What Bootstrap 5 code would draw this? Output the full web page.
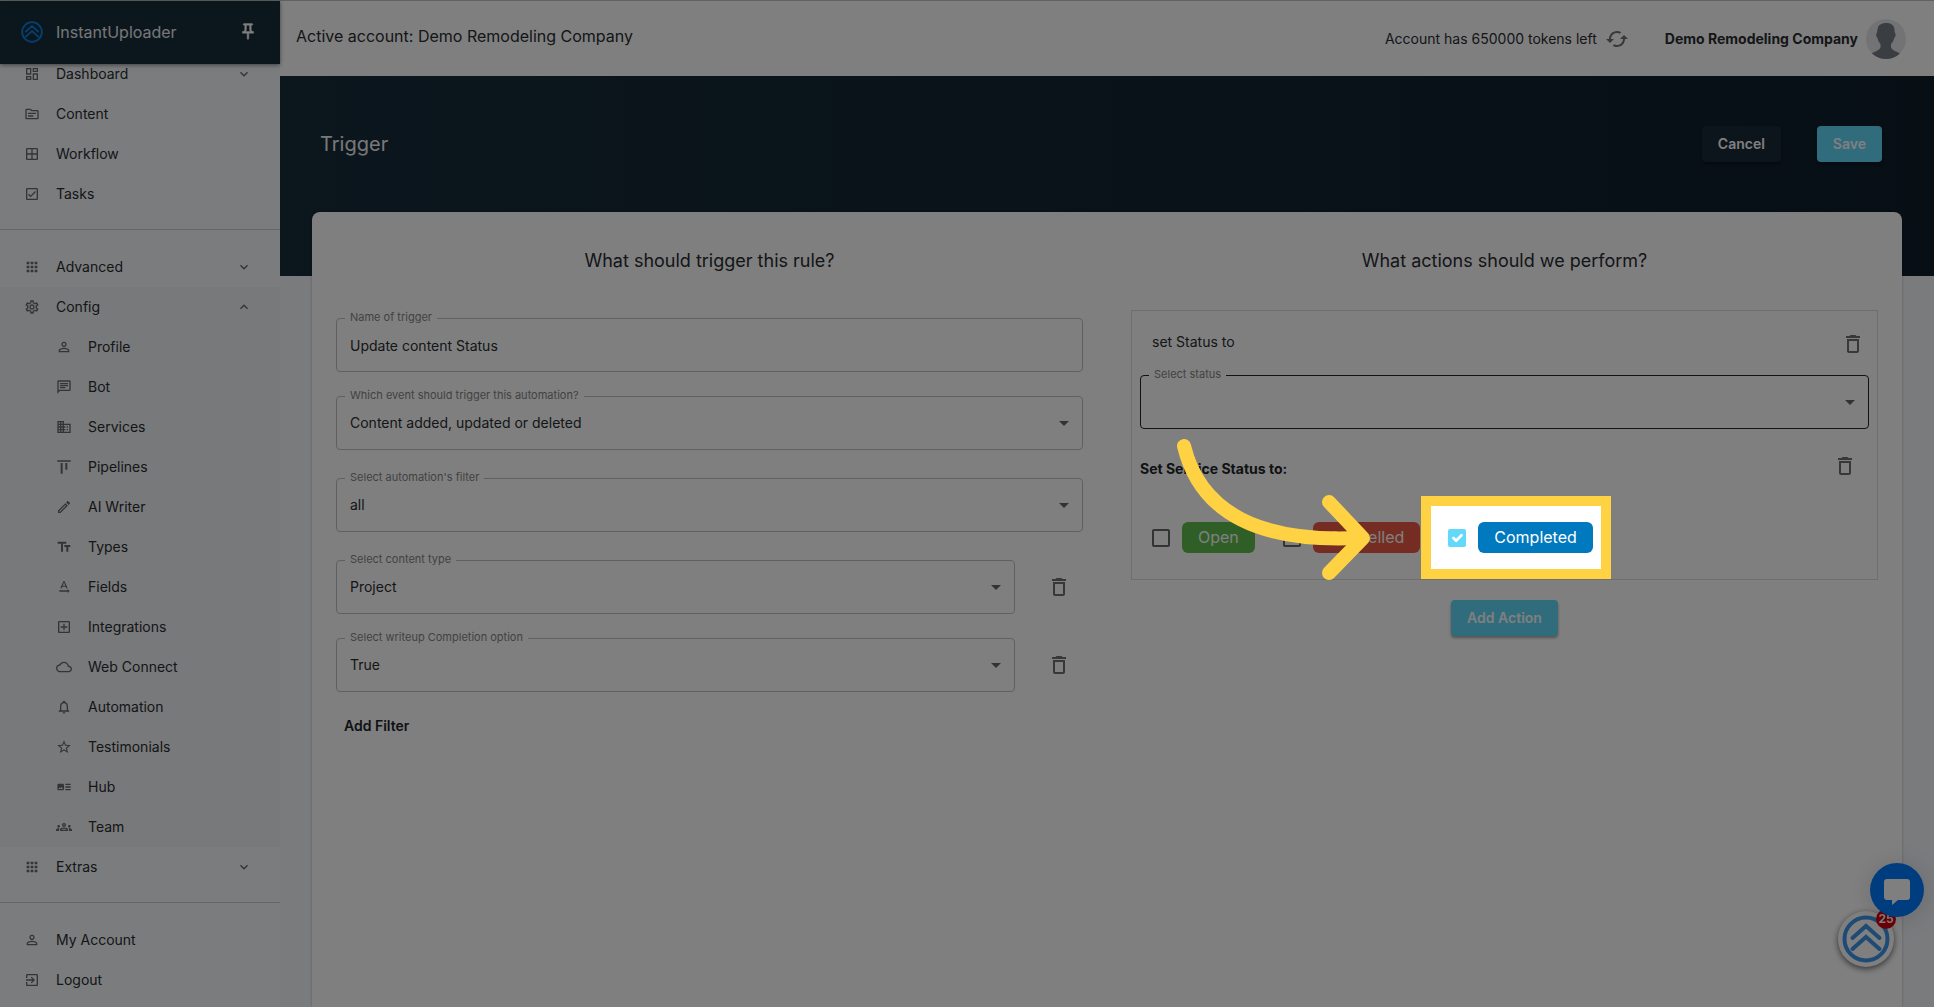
<!DOCTYPE html>
<html lang="en">
<head>
<meta charset="utf-8">
<meta name="viewport" content="width=device-width, initial-scale=1">
<title>InstantUploader - Trigger</title>
<link href="https://cdn.jsdelivr.net/npm/bootstrap@5.3.0/dist/css/bootstrap.min.css" rel="stylesheet">
<style>
  body { font-family: Inter, "Liberation Sans", sans-serif; font-size: 14px; line-height: 20px; color: #2a2d31; background: #f4f6fb; overflow: hidden; }
  .app-shell { min-height: 100vh; border-top: 1px solid #c4c4c4; }
  .ico { width: 16px; height: 16px; fill: currentColor; flex: none; }
  .ico-lg { width: 24px; height: 24px; }

  .side { width: 280px; flex: none; background: #f6f8fb; }
  .side-head { height: 63px; padding: 0 20px 2px 21px; background: #182c3b; color: #fff; position: relative; z-index: 2; box-shadow: 0 1px 4px rgba(0,0,0,.5); font-size: 16px; }
  .side-head a { gap: 13px; color: #e9ecef; }
  .side-logo { width: 22px; height: 22px; color: #0b7de0; }
  .side-nav { margin-top: -10px; }
  .side-link { height: 40px; padding: 0 28px 0 24px; gap: 16px; color: #2a2d31; text-decoration: none; }
  .side-link .ico { color: #66696d; }
  .side-sub .side-link { padding-left: 56px; }
  .side-open { background: #f0f2f5; }
  .side-rule { margin: 15px 0 17px; border-color: #cbced2; opacity: 1; }

  .topbar { min-height: 75px; padding: 0 28px 0 16px; background: #fff; }
  .topbar-title { font-size: 16px; padding-bottom: 6px; }
  .account-name { margin: 0 8px 0 36px; font-weight: 700; }
  .avatar { width: 40px; height: 40px; }
  .hero { min-height: 200px; padding: 50px 52px 0 40px; background: linear-gradient(90deg, #182c3b, #0e1f2b); color: #fff; }
  .hero h1 { font-size: 20px; line-height: 36px; font-weight: 400; color: #f1f1f1; }
  .act { height: 36px; padding: 0 16px 2px; border: 0; border-radius: 4px; font-size: 14px; font-weight: 600; color: #fff; box-shadow: 0 2px 3px rgba(0,0,0,.35); }
  .act-dark { background: #182838; }
  .act-cyan { background: #62d8fb; }
  .act:hover { color: #fff; background: #48c4e8; }

  .panel { margin: -64px 32px 0; background: #fff; border-radius: 8px 8px 0 0; box-shadow: 0 0 3px rgba(0,0,0,.25); }
  .pane { padding: 36px 24px 0; }
  .pane h2 { font-size: 18px; line-height: 26px; font-weight: 400; text-align: center; margin: 0; }
  .field { position: relative; }
  .field > label { position: absolute; left: 9px; top: -8px; padding: 0 5px; background: #fff; font-size: 11px; line-height: 14px; color: #858585; }
  .field .form-control, .field .form-select { height: 54px; padding: 0 13px; border: 1px solid #c0c0c0; border-radius: 4px; font-size: 14px; color: #2a2d31; background: none; }
  .field .form-select { padding-bottom: 2px; }
  .field .ico { position: absolute; right: 7px; top: 15px; color: #666; pointer-events: none; }
  .field-focus .form-select { border-color: #212529; }
  .left-stack { margin-top: 44px; }
  .gap-field { margin-top: 24px; }
  .gap-wide { margin-top: 28px; }
  .bin { padding: 0; border: 0; background: none; color: #707070; line-height: 0; }
  .bin-row { gap: 32px; padding-right: 12px; }
  .strong-btn { border: 0; background: none; padding: 0 8px; font-weight: 600; color: #212529; }

  .rule-box { margin-top: 36px; height: 270px; padding: 0 8px; border: 1px solid #dcdcdc; }
  .rule-head { padding: 2px 4px 0 12px; height: 64px; }
  .rule-head span { padding-bottom: 4px; }
  .svc-head { padding: 24px 12px 0 0; font-weight: 700; color: #212529; }
  .svc-head span { padding-top: 6px; }
  .svc-list { padding: 43px 12px 0; gap: 28px; }
  .svc { position: relative; gap: 12px; height: 31px; }
  .svc .form-check-input { width: 18px; height: 18px; margin: 0; border: 2px solid #666; border-radius: 2px; background-color: #fff; }
  .svc .form-check-input:checked { border-color: #62d8fb; background-color: #62d8fb; background-size: 18px 18px; }
  .pill { display: block; padding: 0 16px; border-radius: 6px; color: #fff; font-size: 16px; line-height: 31px; }
  .pill-green { background: #61bd4f; }
  .pill-red { background: #eb5a46; }
  .pill-blue { background: #0079bf; }

  .spot { position: absolute; inset: -26px -18px -26px -27px; border: 10px solid #ffd243; box-shadow: 0 0 0 4000px rgba(0,0,0,.5); z-index: 1080; pointer-events: none; }
  .spot-arrow { position: absolute; left: -272px; top: -84px; width: 200px; height: 144px; z-index: 1081; pointer-events: none; }

  .fab-stack { position: fixed; right: 10px; bottom: 38px; width: 88px; height: 106px; z-index: 1030; }
  .fab { position: absolute; border: 0; padding: 0; border-radius: 50%; }
  .fab-chat { right: 0; top: 0; width: 54px; height: 54px; background: #007bff; box-shadow: 0 2px 24px rgba(0,0,0,.15); }
  .fab-app { left: 2px; bottom: 2px; width: 56px; height: 56px; background: #fff; box-shadow: 0 2px 6px rgba(0,0,0,.6); }
  .fab-count { position: absolute; left: 40px; top: 46px; width: 20px; height: 20px; border-radius: 50%; background: #d8000c; color: #fff; font-size: 12px; line-height: 20px; font-weight: 700; text-align: center; }
</style>
<script src="https://cdn.jsdelivr.net/npm/bootstrap@5.3.0/dist/js/bootstrap.bundle.min.js"></script>
</head>
<body>
<svg class="d-none" xmlns="http://www.w3.org/2000/svg">
  <symbol id="i-dash" viewBox="0 0 24 24"><path d="M19 5v2h-4V5h4M9 5v6H5V5h4m10 8v6h-4v-6h4M9 17v2H5v-2h4M21 3h-8v6h8V3zM11 3H3v10h8V3zm10 8h-8v10h8V11zm-10 4H3v6h8v-6z"/></symbol>
  <symbol id="i-content" viewBox="0 0 24 24"><path d="M20 6h-8l-2-2H4c-1.100 0-1.990.9-1.990 2L2 18c0 1.100.9 2 2 2h16c1.100 0 2-.9 2-2V8c0-1.100-.9-2-2-2zm0 12H4V6h5.170l2 2H20v10zm-2-6H6v-2h12v2zm-4 4H6v-2h8v2z"/></symbol>
  <symbol id="i-window" viewBox="0 0 24 24"><path d="M19 3H5c-1.100 0-2 .9-2 2v14c0 1.100.9 2 2 2h14c1.100 0 2-.9 2-2V5c0-1.100-.9-2-2-2zm0 8h-6V5h6v6zm-8-6v6H5V5h6zm-6 8h6v6H5v-6zm8 6v-6h6v6h-6z"/></symbol>
  <symbol id="i-check" viewBox="0 0 24 24"><path d="M19 3H5c-1.100 0-2 .9-2 2v14c0 1.100.9 2 2 2h14c1.100 0 2-.9 2-2V5c0-1.100-.9-2-2-2zm0 16H5V5h14v14zM17.990 9l-1.410-1.420-6.590 6.590-2.580-2.570-1.420 1.410 4 3.990z"/></symbol>
  <symbol id="i-apps" viewBox="0 0 24 24"><path d="M4 8h4V4H4v4zm6 12h4v-4h-4v4zm-6 0h4v-4H4v4zm0-6h4v-4H4v4zm6 0h4v-4h-4v4zm6-10v4h4V4h-4zm-6 4h4V4h-4v4zm6 6h4v-4h-4v4zm0 6h4v-4h-4v4z"/></symbol>
  <symbol id="i-gear" viewBox="0 0 24 24"><path d="M19.43 12.98c.04-.32.07-.64.07-.98 0-.34-.03-.66-.07-.98l2.11-1.65c.19-.15.24-.42.12-.64l-2-3.46c-.09-.16-.26-.25-.44-.25-.06 0-.12.01-.17.03l-2.49 1c-.52-.4-1.08-.73-1.69-.98l-.38-2.65C14.46 2.18 14.25 2 14 2h-4c-.25 0-.46.18-.49.42l-.38 2.65c-.61.25-1.17.59-1.69.98l-2.49-1c-.06-.02-.12-.03-.18-.03-.17 0-.34.09-.43.25l-2 3.46c-.13.22-.07.49.12.64l2.11 1.65c-.04.32-.07.65-.07.98 0 .33.03.66.07.98l-2.11 1.65c-.19.15-.24.42-.12.64l2 3.46c.09.16.26.25.44.25.06 0 .12-.01.17-.03l2.49-1c.52.4 1.08.73 1.69.98l.38 2.65c.03.24.24.42.49.42h4c.25 0 .46-.18.49-.42l.38-2.65c.61-.25 1.17-.59 1.69-.98l2.49 1c.06.02.12.03.18.03.17 0 .34-.09.43-.25l2-3.46c.12-.22.07-.49-.12-.64l-2.11-1.65zm-1.98-1.71c.04.31.05.52.05.73 0 .21-.02.43-.05.73l-.14 1.13.89.7 1.08.84-.7 1.21-1.27-.51-1.04-.42-.9.68c-.43.32-.84.56-1.25.73l-1.06.43-.16 1.13-.2 1.35h-1.4l-.19-1.35-.16-1.13-1.06-.43c-.43-.18-.83-.41-1.23-.71l-.91-.7-1.06.43-1.27.51-.7-1.21 1.08-.84.89-.7-.14-1.13c-.03-.31-.05-.54-.05-.74s.02-.43.05-.73l.14-1.13-.89-.7-1.08-.84.7-1.21 1.27.51 1.04.42.9-.68c.43-.32.84-.56 1.25-.73l1.06-.43.16-1.13.2-1.35h1.39l.19 1.35.16 1.13 1.06.43c.43.18.83.41 1.23.71l.91.7 1.06-.43 1.27-.51.7 1.21-1.07.85-.89.7.14 1.13zM12 8c-2.21 0-4 1.79-4 4s1.79 4 4 4 4-1.79 4-4-1.79-4-4-4zm0 6c-1.1 0-2-.9-2-2s.9-2 2-2 2 .9 2 2-.9 2-2 2z"/></symbol>
  <symbol id="i-person" viewBox="0 0 24 24"><path d="M12 5.9c1.16 0 2.1.94 2.1 2.1s-.94 2.1-2.1 2.1S9.900 9.160 9.900 8s.94-2.1 2.1-2.1m0 9c2.970 0 6.100 1.460 6.100 2.100v1.100H5.900V17c0-.64 3.130-2.100 6.100-2.100M12 4C9.790 4 8 5.790 8 8s1.790 4 4 4 4-1.790 4-4-1.790-4-4-4zm0 9c-2.670 0-8 1.340-8 4v3h16v-3c0-2.660-5.330-4-8-4z"/></symbol>
  <symbol id="i-chat" viewBox="0 0 24 24"><path d="M4 4h16v12H5.170L4 17.170V4m0-2c-1.100 0-1.990.9-1.990 2L2 22l4-4h14c1.100 0 2-.9 2-2V4c0-1.100-.9-2-2-2H4zm2 10h8v2H6v-2zm0-3h12v2H6V9zm0-3h12v2H6V6z"/></symbol>
  <symbol id="i-building" viewBox="0 0 24 24"><path d="M12 7V3H2v18h20V7H12zM6 19H4v-2h2v2zm0-4H4v-2h2v2zm0-4H4V9h2v2zm0-4H4V5h2v2zm4 12H8v-2h2v2zm0-4H8v-2h2v2zm0-4H8V9h2v2zm0-4H8V5h2v2zm10 12h-8v-2h2v-2h-2v-2h2v-2h-2V9h8v10zm-2-8h-2v2h2v-2zm0 4h-2v2h2v-2z"/></symbol>
  <symbol id="i-pipe" viewBox="0 0 24 24"><path d="M22 2v2H2V2h20zM7 22h3V6H7v16zm7-6h3V6h-3v10z"/></symbol>
  <symbol id="i-pencil" viewBox="0 0 24 24"><path d="M14.060 9.020l.92.92L5.920 19H5v-.92l9.060-9.060M17.660 3c-.25 0-.51.1-.7.29l-1.830 1.830 3.750 3.750 1.830-1.830c.39-.39.39-1.020 0-1.410l-2.340-2.340c-.2-.2-.45-.29-.71-.29zm-3.600 3.190L3 17.250V21h3.750L17.810 9.940l-3.750-3.750z"/></symbol>
  <symbol id="i-sizes" viewBox="0 0 24 24"><path d="M2.500 4v3h5v12h3V7h5V4h-13zm19 5h-9v3h3v7h3v-7h3V9z"/></symbol>
  <symbol id="i-baseline" viewBox="0 0 24 24"><path d="M12.750 3h-1.500L6.500 14h2.100l.9-2.200h5l.9 2.200h2.100L12.750 3zm-2.620 7L12 4.980 13.870 10h-3.740zm10.370 8l-3-3v2H5v2h12.500v2l3-3z"/></symbol>
  <symbol id="i-plusbox" viewBox="0 0 24 24"><path d="M19 3H5c-1.110 0-2 .9-2 2v14c0 1.100.89 2 2 2h14c1.100 0 2-.9 2-2V5c0-1.100-.9-2-2-2zm0 16H5V5h14v14zm-8-2h2v-4h4v-2h-4V7h-2v4H7v2h4z"/></symbol>
  <symbol id="i-cloud" viewBox="0 0 24 24"><path d="M19.350 10.040C18.670 6.590 15.640 4 12 4 9.110 4 6.600 5.640 5.350 8.040 2.340 8.360 0 10.910 0 14c0 3.310 2.690 6 6 6h13c2.760 0 5-2.240 5-5 0-2.640-2.050-4.780-4.650-4.960zM19 18H6c-2.210 0-4-1.790-4-4 0-2.050 1.530-3.760 3.560-3.970l1.070-.11.5-.95C8.080 7.140 9.940 6 12 6c2.620 0 4.880 1.860 5.390 4.430l.3 1.500 1.530.11c1.560.1 2.780 1.410 2.780 2.960 0 1.650-1.350 3-3 3z"/></symbol>
  <symbol id="i-bell" viewBox="0 0 24 24"><path d="M12 22c1.100 0 2-.9 2-2h-4c0 1.100.9 2 2 2zm6-6v-5c0-3.070-1.630-5.640-4.500-6.320V4c0-.83-.67-1.500-1.500-1.500s-1.500.67-1.500 1.500v.68C7.640 5.360 6 7.920 6 11v5l-2 2v1h16v-1l-2-2zm-2 1H8v-6c0-2.480 1.510-4.500 4-4.500s4 2.020 4 4.500v6z"/></symbol>
  <symbol id="i-star" viewBox="0 0 24 24"><path d="M22 9.240l-7.190-.62L12 2 9.190 8.630 2 9.240l5.460 4.730L5.820 21 12 17.270 18.180 21l-1.630-7.030L22 9.240zM12 15.400l-3.760 2.270 1-4.280-3.320-2.880 4.380-.38L12 6.100l1.710 4.040 4.380.38-3.320 2.880 1 4.280L12 15.400z"/></symbol>
  <symbol id="i-hub" viewBox="0 0 24 24"><path d="M22 13h-8v-2h8v2zm0-6h-8v2h8V7zm-8 10h8v-2h-8v2zm-2-8v6c0 1.100-.9 2-2 2H4c-1.100 0-2-.9-2-2V9c0-1.100.9-2 2-2h6c1.100 0 2 .9 2 2zm-1.500 6l-2.250-3-1.750 2.260-1.250-1.510L3.500 15h7z"/></symbol>
  <symbol id="i-team" viewBox="0 0 24 24"><path d="M4 13c1.100 0 2-.9 2-2s-.9-2-2-2-2 .9-2 2 .9 2 2 2zm1.130 1.100C4.760 14.040 4.390 14 4 14c-.99 0-1.930.21-2.780.58C.48 14.900 0 15.620 0 16.430V18h4.500v-1.610c0-.83.23-1.610.63-2.290zM20 13c1.100 0 2-.9 2-2s-.9-2-2-2-2 .9-2 2 .9 2 2 2zm4 3.430c0-.81-.48-1.530-1.220-1.850-.85-.37-1.790-.58-2.780-.58-.39 0-.76.04-1.130.1.4.68.63 1.460.63 2.290V18H24v-1.570zm-7.760-2.780c-1.170-.52-2.610-.9-4.240-.9s-3.070.39-4.240.9C6.680 14.130 6 15.210 6 16.390V18h12v-1.610c0-1.180-.68-2.260-1.760-2.740zM8.070 16c.09-.23.13-.39.91-.69.97-.38 1.990-.56 3.020-.56s2.050.18 3.020.56c.77.3.81.46.91.69H8.070zM12 8c.55 0 1 .45 1 1s-.45 1-1 1-1-.45-1-1 .45-1 1-1m0-2c-1.660 0-3 1.340-3 3s1.340 3 3 3 3-1.340 3-3-1.340-3-3-3z"/></symbol>
  <symbol id="i-exit" viewBox="0 0 24 24"><path d="M10.090 15.590L11.500 17l5-5-5-5-1.410 1.410L12.670 11H3v2h9.670l-2.580 2.590zM19 3H5c-1.110 0-2 .9-2 2v4h2V5h14v14H5v-4H3v4c0 1.100.89 2 2 2h14c1.100 0 2-.9 2-2V5c0-1.100-.9-2-2-2z"/></symbol>
  <symbol id="i-down" viewBox="0 0 24 24"><path d="M16.590 8.590L12 13.170 7.410 8.590 6 10l6 6 6-6z"/></symbol>
  <symbol id="i-up" viewBox="0 0 24 24"><path d="M12 8l-6 6 1.410 1.410L12 10.830l4.590 4.580L18 14z"/></symbol>
  <symbol id="i-caret" viewBox="0 0 24 24"><path d="M7 10l5 5 5-5z"/></symbol>
  <symbol id="i-bin" viewBox="0 0 24 24"><path d="M6 19c0 1.100.9 2 2 2h8c1.100 0 2-.9 2-2V7H6v12zM8 9h8v10H8V9zm7.500-5l-1-1h-5l-1 1H5v2h14V4z"/></symbol>
  <symbol id="i-pin" viewBox="0 0 24 24"><path d="M14 4v5c0 1.120.37 2.160 1 3H9c.65-.86 1-1.900 1-3V4h4m3-2H7c-.55 0-1 .45-1 1s.45 1 1 1h1v5c0 1.660-1.340 3-3 3v2h5.970v7l1 1 1-1v-7H19v-2c-1.660 0-3-1.340-3-3V4h1c.55 0 1-.45 1-1s-.45-1-1-1z"/></symbol>
  <symbol id="i-sync" viewBox="0 0 24 24"><path d="M19 8l-4 4h3c0 3.310-2.690 6-6 6-1.010 0-1.970-.25-2.800-.7l-1.460 1.460C8.970 19.540 10.430 20 12 20c4.420 0 8-3.580 8-8h3l-4-4zM6 12c0-3.310 2.690-6 6-6 1.010 0 1.970.25 2.800.7l1.460-1.460C15.030 4.460 13.570 4 12 4c-4.420 0-8 3.580-8 8H1l4 4 4-4H6z"/></symbol>
  <symbol id="i-logo" viewBox="0 0 48 48"><g fill="none" stroke="currentColor" stroke-width="4"><circle cx="24" cy="24" r="21.500"/><path d="M10.500 23L24 11l13.500 12M10.500 34L24 22l13.500 12" stroke-linecap="round"/></g></symbol>
</svg>

<div class="app-shell d-flex">
  <aside class="side">
    <div class="side-head d-flex align-items-center justify-content-between">
      <a href="#" class="d-flex align-items-center text-decoration-none"><svg class="side-logo"><use href="#i-logo"/></svg>InstantUploader</a>
      <svg class="ico ico-lg" viewBox="0 0 24 24"><g transform="translate(2.400 2) scale(.8)" stroke="currentColor" stroke-width=".6"><use href="#i-pin" width="24" height="24"/></g></svg>
    </div>
    <nav class="side-nav" aria-label="Main">
      <a class="side-link d-flex align-items-center" href="#"><svg class="ico"><use href="#i-dash"/></svg><span>Dashboard</span><svg class="ico ms-auto"><use href="#i-down"/></svg></a>
      <a class="side-link d-flex align-items-center" href="#"><svg class="ico"><use href="#i-content"/></svg><span>Content</span></a>
      <a class="side-link d-flex align-items-center" href="#"><svg class="ico"><use href="#i-window"/></svg><span>Workflow</span></a>
      <a class="side-link d-flex align-items-center" href="#"><svg class="ico"><use href="#i-check"/></svg><span>Tasks</span></a>
      <hr class="side-rule">
      <a class="side-link d-flex align-items-center" href="#"><svg class="ico"><use href="#i-apps"/></svg><span>Advanced</span><svg class="ico ms-auto"><use href="#i-down"/></svg></a>
      <div class="side-open">
        <a class="side-link d-flex align-items-center" href="#"><svg class="ico"><use href="#i-gear"/></svg><span>Config</span><svg class="ico ms-auto"><use href="#i-up"/></svg></a>
        <div class="side-sub">
          <a class="side-link d-flex align-items-center" href="#"><svg class="ico"><use href="#i-person"/></svg><span>Profile</span></a>
          <a class="side-link d-flex align-items-center" href="#"><svg class="ico"><use href="#i-chat"/></svg><span>Bot</span></a>
          <a class="side-link d-flex align-items-center" href="#"><svg class="ico"><use href="#i-building"/></svg><span>Services</span></a>
          <a class="side-link d-flex align-items-center" href="#"><svg class="ico"><use href="#i-pipe"/></svg><span>Pipelines</span></a>
          <a class="side-link d-flex align-items-center" href="#"><svg class="ico"><use href="#i-pencil"/></svg><span>AI Writer</span></a>
          <a class="side-link d-flex align-items-center" href="#"><svg class="ico"><use href="#i-sizes"/></svg><span>Types</span></a>
          <a class="side-link d-flex align-items-center" href="#"><svg class="ico"><use href="#i-baseline"/></svg><span>Fields</span></a>
          <a class="side-link d-flex align-items-center" href="#"><svg class="ico"><use href="#i-plusbox"/></svg><span>Integrations</span></a>
          <a class="side-link d-flex align-items-center" href="#"><svg class="ico"><use href="#i-cloud"/></svg><span>Web Connect</span></a>
          <a class="side-link d-flex align-items-center" href="#"><svg class="ico"><use href="#i-bell"/></svg><span>Automation</span></a>
          <a class="side-link d-flex align-items-center" href="#"><svg class="ico"><use href="#i-star"/></svg><span>Testimonials</span></a>
          <a class="side-link d-flex align-items-center" href="#"><svg class="ico"><use href="#i-hub"/></svg><span>Hub</span></a>
          <a class="side-link d-flex align-items-center" href="#"><svg class="ico"><use href="#i-team"/></svg><span>Team</span></a>
        </div>
      </div>
      <a class="side-link d-flex align-items-center" href="#"><svg class="ico"><use href="#i-apps"/></svg><span>Extras</span><svg class="ico ms-auto"><use href="#i-down"/></svg></a>
      <hr class="side-rule">
      <a class="side-link d-flex align-items-center" href="#"><svg class="ico"><use href="#i-person"/></svg><span>My Account</span></a>
      <a class="side-link d-flex align-items-center" href="#"><svg class="ico"><use href="#i-exit"/></svg><span>Logout</span></a>
    </nav>
  </aside>

  <main class="flex-grow-1 d-flex flex-column">
    <header class="topbar d-flex align-items-center justify-content-between">
      <div class="topbar-title">Active account: Demo Remodeling Company</div>
      <div class="d-flex align-items-center">
        <span>Account has 650000 tokens left</span>
        <button class="bin ms-2" type="button" aria-label="Refresh tokens"><svg class="ico ico-lg"><use href="#i-sync"/></svg></button>
        <strong class="account-name">Demo Remodeling Company</strong>
        <svg class="avatar" viewBox="0 0 40 40" role="img" aria-label="User"><defs><clipPath id="av"><circle cx="20" cy="20" r="20"/></clipPath></defs><g clip-path="url(#av)"><rect width="40" height="40" fill="#e6e7ea"/><path d="M11.500 11c0-5 4-7 8.500-7s9 2 8.500 8l.5 2c1 .5.700 4-.8 5-.5 2.500-1.500 4.500-3.200 6v3.500c1 3 7 4.500 9.500 6.500v7H5v-7c2.500-2 8.500-3.500 9.500-6.500V25c-1.500-1.500-2.500-3.500-3-6-1.500-1-1.700-4.500-.7-5z" fill="#747a84"/></g></svg>
      </div>
    </header>

    <section class="hero d-flex align-items-start justify-content-between">
      <h1 class="m-0">Trigger</h1>
      <div class="d-flex gap-4">
        <button class="btn act act-dark me-2" type="button">Cancel</button>
        <button class="btn act act-cyan ms-1" type="button">Save</button>
      </div>
    </section>

    <section class="panel flex-grow-1">
      <div class="row g-0">
        <div class="col-6 pane">
          <h2>What should trigger this rule?</h2>
          <div class="left-stack">
            <div class="field"><label for="fName">Name of trigger</label><input class="form-control" id="fName" type="text" value="Update content Status"></div>
            <div class="field gap-field"><label for="fEvent">Which event should trigger this automation?</label><select class="form-select" id="fEvent"><option>Content added, updated or deleted</option></select><svg class="ico ico-lg"><use href="#i-caret"/></svg></div>
            <div class="field gap-wide"><label for="fFilter">Select automation's filter</label><select class="form-select" id="fFilter"><option>all</option></select><svg class="ico ico-lg"><use href="#i-caret"/></svg></div>
            <div class="bin-row gap-wide d-flex align-items-center">
              <div class="field flex-grow-1"><label for="fType">Select content type</label><select class="form-select" id="fType"><option>Project</option></select><svg class="ico ico-lg"><use href="#i-caret"/></svg></div>
              <button class="bin" type="button" aria-label="Delete content type filter"><svg class="ico ico-lg"><use href="#i-bin"/></svg></button>
            </div>
            <div class="bin-row gap-field d-flex align-items-center">
              <div class="field flex-grow-1"><label for="fDone">Select writeup Completion option</label><select class="form-select" id="fDone"><option>True</option></select><svg class="ico ico-lg"><use href="#i-caret"/></svg></div>
              <button class="bin" type="button" aria-label="Delete completion filter"><svg class="ico ico-lg"><use href="#i-bin"/></svg></button>
            </div>
            <button class="strong-btn gap-field" type="button">Add Filter</button>
          </div>
        </div>

        <div class="col-6 pane">
          <h2>What actions should we perform?</h2>
          <div class="rule-box">
            <div class="rule-head d-flex justify-content-between align-items-center">
              <span>set Status to</span>
              <button class="bin" type="button" aria-label="Delete status action"><svg class="ico ico-lg"><use href="#i-bin"/></svg></button>
            </div>
            <div class="field field-focus"><label for="fStatus">Select status</label><select class="form-select" id="fStatus"><option></option></select><svg class="ico ico-lg"><use href="#i-caret"/></svg></div>
            <div class="svc-head d-flex justify-content-between align-items-center">
              <span>Set Service Status to:</span>
              <button class="bin" type="button" aria-label="Delete service status action"><svg class="ico ico-lg"><use href="#i-bin"/></svg></button>
            </div>
            <div class="svc-list d-flex">
              <div class="svc d-flex align-items-center"><input class="form-check-input" type="checkbox" id="cOpen"><label class="pill pill-green" for="cOpen">Open</label></div>
              <div class="svc d-flex align-items-center"><input class="form-check-input" type="checkbox" id="cCancel"><label class="pill pill-red" for="cCancel">Cancelled</label></div>
              <div class="svc d-flex align-items-center">
                <input class="form-check-input" type="checkbox" id="cDone" checked><label class="pill pill-blue" for="cDone">Completed</label>
                <span class="spot"></span>
                <svg class="spot-arrow" viewBox="1176 438 200 144" fill="none" stroke="#ffd243" stroke-width="14" stroke-linecap="round" stroke-linejoin="round"><path d="M1184 446C1199 508 1252 543 1358 538"/><path d="M1329 502L1363 538L1329 573"/></svg>
              </div>
            </div>
          </div>
          <div class="text-center pt-3 mt-1"><button class="btn act act-cyan" type="button">Add Action</button></div>
        </div>
      </div>
    </section>
  </main>
</div>

<div class="fab-stack">
  <button class="fab fab-app" type="button" aria-label="Open app menu"><svg width="48" height="48" color="#3d95ea"><use href="#i-logo"/></svg></button>
  <span class="fab-count">25</span>
  <button class="fab fab-chat" type="button" aria-label="Open chat"><svg width="54" height="54" viewBox="0 0 54 54"><path d="M17 16h20q3 0 3 3v15q0 3-3 3h-9l-6 5v-5h-5q-3 0-3-3V19q0-3 3-3z" fill="#fff"/></svg></button>
</div>
</body>
</html>
